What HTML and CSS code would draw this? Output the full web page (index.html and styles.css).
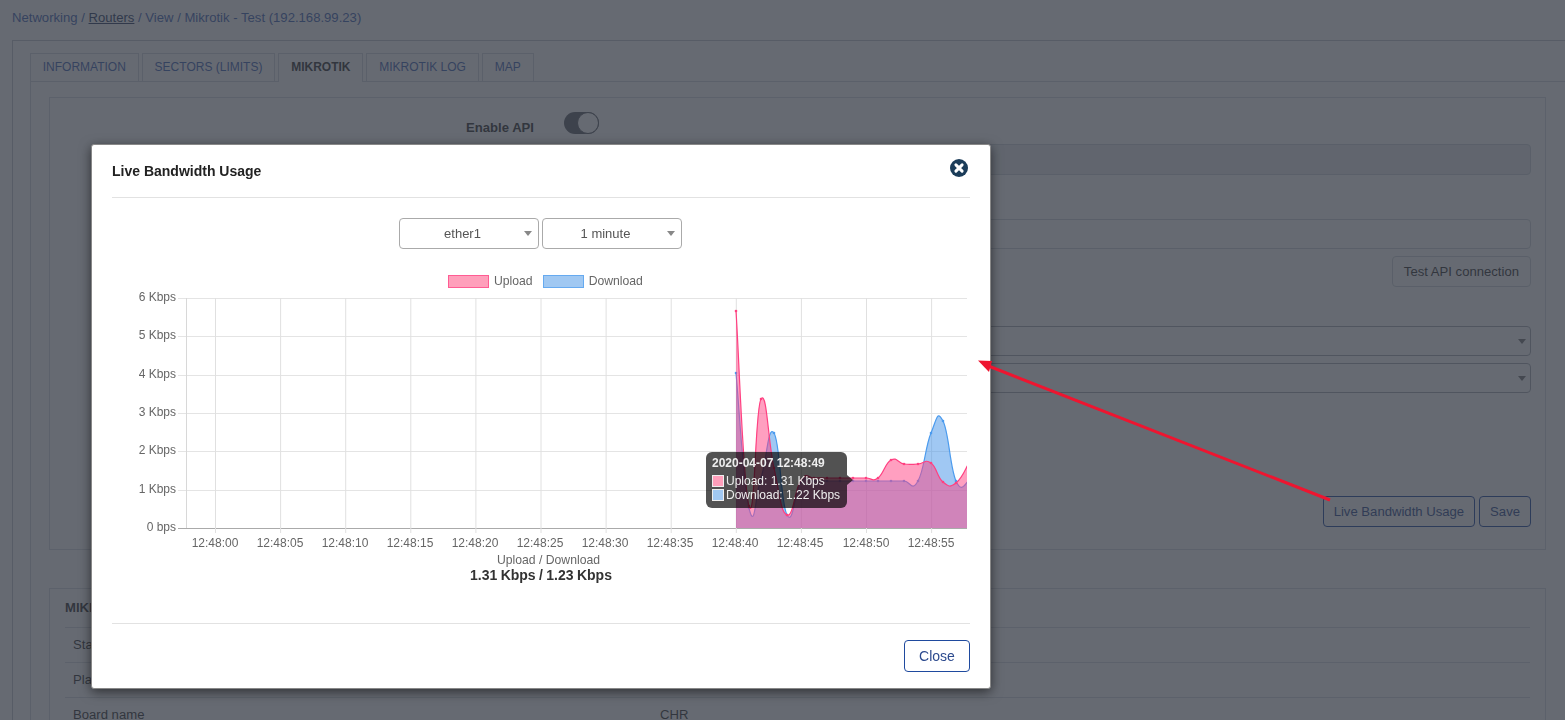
FILE: index.html
```html
<!DOCTYPE html>
<html lang="en">
<head>
  <meta charset="UTF-8" />
  <meta name="viewport" content="width=device-width, initial-scale=1.0"/>
  <title>Mikrotik - Test</title>
  <link rel="stylesheet" href="styles.css">
</head>
<body>
  <div class="page">
    <div class="breadcrumb">Networking / <a href="#">Routers</a> / View / Mikrotik - Test (192.168.99.23)</div>

    <div class="outer-panel">
      <ul class="tabs">
        <li class="tab">INFORMATION</li>
        <li class="tab">SECTORS (LIMITS)</li>
        <li class="tab tab-active">MIKROTIK</li>
        <li class="tab">MIKROTIK LOG</li>
        <li class="tab">MAP</li>
      </ul>
      <div class="tab-content">
        <form class="box settings">
          <div class="row row-api">
            <label class="row-label">Enable API</label>
            <span class="toggle"><span class="toggle-knob"></span></span>
          </div>
          <div class="row row-disabled"><div class="control control-disabled"></div></div>
          <div class="row row-input"><div class="control"></div></div>
          <div class="row row-test"><button type="button" class="btn">Test API connection</button></div>
          <div class="row row-select1"><div class="control control-select"></div></div>
          <div class="row row-select2"><div class="control control-select"></div></div>
          <div class="form-actions">
            <button type="button" class="btn btn-primary">Live Bandwidth Usage</button>
            <button type="button" class="btn btn-primary">Save</button>
          </div>
        </form>

        <div class="box info">
          <div class="info-title">MIKROTIK</div>
          <div class="info-row"><span class="info-name">Status</span></div>
          <div class="info-row"><span class="info-name">Platform</span></div>
          <div class="info-row"><span class="info-name">Board name</span><span>CHR</span></div>
        </div>
      </div>
    </div>
  </div>

  <div class="backdrop"></div>

  <div class="modal">
    <div class="modal-header">
      <h4 class="modal-title">Live Bandwidth Usage</h4>
      <svg class="modal-close" viewBox="0 0 18 18" width="18" height="18">
        <circle cx="9" cy="9" r="9" fill="#1b3c59"/>
        <path d="M5.9 5.9l6.2 6.2M12.1 5.9l-6.2 6.2" stroke="#fff" stroke-width="3" stroke-linecap="round"/>
      </svg>
    </div>
    <div class="modal-body">
      <div class="filters">
        <div class="select-wrap"><select class="select"><option>ether1</option></select></div>
        <div class="select-wrap"><select class="select"><option>1 minute</option></select></div>
      </div>
      <div class="legend">
        <span class="legend-swatch swatch-up"></span><span class="legend-text">Upload</span>
        <span class="legend-swatch swatch-down"></span><span class="legend-text">Download</span>
      </div>
      <div class="chart-wrap">
        <svg id="chart" class="chart" width="858" height="262"></svg>
        <div class="tooltip">
          <div class="tooltip-title">2020-04-07 12:48:49</div>
          <div class="tooltip-row"><span class="tooltip-swatch swatch-up"></span>Upload: 1.31 Kbps</div>
          <div class="tooltip-row"><span class="tooltip-swatch swatch-down"></span>Download: 1.22 Kbps</div>
        </div>
      </div>
      <div class="chart-caption">Upload / Download</div>
      <div class="chart-total">1.31 Kbps / 1.23 Kbps</div>
    </div>
    <div class="modal-footer">
      <button type="button" class="btn-close">Close</button>
    </div>
  </div>

  <svg class="arrow" width="1565" height="720" viewBox="0 0 1565 720">
    <line x1="1330" y1="500" x2="986" y2="365" stroke="#ee1530" stroke-width="3"/>
    <polygon points="978,360.5 992,361 989,372" fill="#ee1530"/>
  </svg>

  <script src="chart.js"></script>
</body>
</html>
```

FILE: styles.css
```css
html, body {
  margin: 0;
  height: 720px;
  overflow: hidden;
}
body {
  background: #fff;
  color: #333;
  font-family: "Liberation Sans", Arial, sans-serif;
  font-size: 13.12px;
}
.page {
  width: 1700px;
}
.breadcrumb {
  height: 40px;
  box-sizing: border-box;
  padding: 10px 12px 0;
  line-height: 15px;
  color: #3f64b4;
}
.breadcrumb a {
  color: #2c3d66;
}
.outer-panel {
  margin-left: 12px;
  padding: 12px 17px 0;
  border: 1px solid #c4c8d0;
  height: 800px;
}
.tabs {
  display: flex;
  align-items: flex-start;
  gap: 3px;
  list-style: none;
  margin: 0;
  padding: 0;
}
.tab {
  height: 27px;
  padding: 0 12px 0 11.75px;
  border: 1px solid #d4d8e0;
  border-bottom: none;
  line-height: 27px;
  font-size: 12px;
  color: #3f64b4;
  background: #fff;
}
.tab-active {
  position: relative;
  height: 28px;
  margin-bottom: -1px;
  font-weight: bold;
  color: #333;
}
.tab-content {
  border: 1px solid #d4d8e0;
  padding: 15px 18px;
  height: 700px;
}
.box {
  border: 1px solid #d8dce2;
}
.settings {
  width: 1497px;
  height: 453px;
  box-sizing: border-box;
  padding: 14px 14px 0 15px;
}
.row {
  padding-left: 499px;
  display: flex;
  width: 967px;
}
.row-api {
  position: relative;
  height: 22px;
  align-items: center;
}
.row-label {
  position: absolute;
  right: 997px;
  top: 8px;
  font-weight: bold;
  white-space: nowrap;
}
.toggle {
  width: 35px;
  height: 22px;
  border-radius: 11px;
  background: #5c6068;
  display: flex;
  justify-content: flex-end;
}
.toggle-knob {
  width: 22px;
  height: 22px;
  box-sizing: border-box;
  border: 1px solid #5c6068;
  border-radius: 50%;
  background: #fff;
}
.control {
  flex: 1;
  height: 30px;
  box-sizing: border-box;
  border: 1px solid #ced4da;
  border-radius: 4px;
  position: relative;
}
.control-disabled {
  height: 31px;
  background: #e9ecef;
}
.control-select {
  border-color: #a8acb4;
}
.control-select::after {
  content: "";
  position: absolute;
  right: 4px;
  top: 12px;
  border: 4.5px solid transparent;
  border-top: 5px solid #777;
  border-bottom: none;
}
.row-disabled { margin-top: 10px; }
.row-input { margin-top: 44px; }
.row-test { margin-top: 7px; justify-content: flex-end; }
.row-select1 { margin-top: 39px; }
.row-select2 { margin-top: 7px; }
.btn {
  height: 31px;
  padding: 0 11px;
  border: 1px solid #ced4da;
  border-radius: 4px;
  background: #fff;
  color: #333;
  font: 13.12px "Liberation Sans", Arial, sans-serif;
}
.btn-primary {
  padding: 0 10px;
  border-color: #1f4a9e;
  color: #2c4a8e;
}
.form-actions {
  display: flex;
  gap: 4px;
  justify-content: flex-end;
  margin-top: 103px;
}
.info {
  margin-top: 38px;
  width: 1465px;
  padding: 11px 15px;
}
.info-title {
  font-weight: bold;
  height: 27px;
  line-height: 16px;
}
.info-row {
  display: flex;
  height: 34px;
  border-top: 1px solid #d8dce2;
  line-height: 34px;
  padding-left: 8px;
}
.info-name {
  width: 587px;
}

.backdrop {
  position: fixed;
  inset: 0;
  background: rgba(51, 56, 67, 0.75);
}

.modal {
  position: fixed;
  left: 91px;
  top: 144px;
  width: 898px;
  height: 543px;
  border: 1px solid #888;
  border-radius: 3px;
  background: #fff;
  box-shadow: 0 3px 12px rgba(0, 0, 0, 0.55);
  display: flex;
  flex-direction: column;
}
.modal-header {
  margin: 0 20px;
  height: 52px;
  border-bottom: 1px solid #e2e2e2;
  display: flex;
  justify-content: space-between;
  align-items: flex-start;
}
.modal-title {
  margin: 18px 0 0;
  font-size: 14px;
  line-height: 17px;
  color: #222;
}
.modal-close {
  margin: 14px 2px 0 0;
}
.modal-body {
  flex: 1;
  margin: 0 20px;
  padding-top: 20px;
}
.filters {
  display: flex;
  justify-content: center;
  gap: 3px;
  height: 31px;
  padding-right: 2px;
}
.select-wrap {
  position: relative;
}
.select-wrap::after {
  content: "";
  position: absolute;
  right: 7px;
  top: 13px;
  border: 4.5px solid transparent;
  border-top: 5px solid #888;
  border-bottom: none;
}
.select {
  appearance: none;
  width: 140px;
  height: 31px;
  padding: 0 12px 0 0;
  border: 1px solid #aaa;
  border-radius: 4px;
  background: #fff;
  color: #555;
  font: 13px "Liberation Sans", Arial, sans-serif;
  text-align: center;
  text-align-last: center;
}
.legend {
  display: flex;
  align-items: center;
  height: 14px;
  margin: 25px 0 0 336px;
  font-size: 12.2px;
  color: #666;
}
.legend-swatch {
  width: 41px;
  height: 13px;
  box-sizing: border-box;
  border: 1.5px solid;
}
.swatch-up {
  background: #ff9fbb;
  border-color: #ff5c93;
}
.swatch-down {
  background: #a0c8f2;
  border-color: #66aaf0;
}
.legend-text {
  margin: 0 10px 0 5px;
}
.chart-wrap {
  position: relative;
  height: 262px;
  margin-top: 2px;
}
.chart {
  display: block;
}
.chart text {
  font-family: "Liberation Sans", Arial, sans-serif;
  font-size: 12px;
  fill: #666;
}
.tooltip {
  position: absolute;
  left: 594px;
  top: 162px;
  width: 141px;
  height: 56px;
  box-sizing: border-box;
  padding: 4px 6px;
  border-radius: 6px;
  background: rgba(0, 0, 0, 0.68);
  color: #eee;
  font-size: 12px;
  line-height: 14px;
  white-space: nowrap;
}
.tooltip::after {
  content: "";
  position: absolute;
  left: 100%;
  top: 23px;
  border: 5px solid transparent;
  border-left: 6px solid rgba(0, 0, 0, 0.68);
  border-right: none;
}
.tooltip-title {
  font-weight: bold;
  margin-bottom: 4px;
  line-height: 14px;
}
.tooltip-row {
  display: flex;
  align-items: center;
}
.tooltip-swatch {
  width: 12px;
  height: 12px;
  box-sizing: border-box;
  border: 1px solid;
  margin-right: 2px;
}
.chart-caption {
  margin-top: 1px;
  padding-left: 385px;
  font-size: 12.2px;
  line-height: 14px;
  color: #666;
}
.chart-total {
  padding-left: 358px;
  font-size: 14px;
  line-height: 16px;
  font-weight: bold;
  word-spacing: -0.5px;
  color: #333;
}
.modal-footer {
  margin: 0 20px;
  height: 64px;
  border-top: 1px solid #e2e2e2;
  display: flex;
  justify-content: flex-end;
  align-items: flex-start;
}
.btn-close {
  margin-top: 16px;
  width: 66px;
  height: 32px;
  border: 1px solid #1f4a9e;
  border-radius: 4px;
  background: #fff;
  color: #2c4a8e;
  font: 14px "Liberation Sans", Arial, sans-serif;
}
.arrow {
  position: fixed;
  left: 0;
  top: 0;
  pointer-events: none;
}
```

FILE: chart.js
```js
// svg origin is at page x=112, y=290
const svg = document.getElementById('chart');
const NS = 'http://www.w3.org/2000/svg';
const X0 = 74, X1 = 855, Y0 = 8, Y1 = 238;

const labels = ['12:48:00', '12:48:05', '12:48:10', '12:48:15', '12:48:20', '12:48:25',
  '12:48:30', '12:48:35', '12:48:40', '12:48:45', '12:48:50', '12:48:55'];
const yLabels = ['6 Kbps', '5 Kbps', '4 Kbps', '3 Kbps', '2 Kbps', '1 Kbps', '0 bps'];

// points in page coordinates, one per second from 12:48:40, last one is cut off by the plot edge
const xs = [736, 749, 761, 774, 787, 801, 814, 827, 840, 853, 866, 878, 891, 904, 918, 931, 943, 956, 969];
const upload = [311, 506, 399, 468, 515, 480, 478, 478, 478, 478, 478, 478, 460, 464, 464, 463, 482, 483, 463];
const download = [373, 508, 478, 433, 515, 482, 481, 481, 481, 481, 481, 481, 481, 481, 481, 433, 421, 481, 481];

function add(tag, attrs, text, parent) {
  const el = document.createElementNS(NS, tag);
  for (const k in attrs) el.setAttribute(k, attrs[k]);
  if (text) el.textContent = text;
  (parent || svg).appendChild(el);
  return el;
}

// horizontal grid
yLabels.forEach((label, i) => {
  const y = Math.round(Y0 + i * (Y1 - Y0) / 6) + 0.5;
  const last = i === 6;
  add('line', { x1: X0 - 8, x2: X1, y1: y, y2: y, stroke: last ? '#aaa' : '#e4e4e4' });
  add('text', { x: X0 - 10, y: y + 2.5, 'text-anchor': 'end' }, label);
});

// vertical grid, spacing is not a whole number so some lines come out soft
add('line', { x1: X0 + 0.5, x2: X0 + 0.5, y1: Y0, y2: Y1, stroke: '#d8d8d8' });
labels.forEach((label, i) => {
  const x = 103.5 + i * 65.1;
  add('line', { x1: x, x2: x, y1: Y0, y2: Y1 + 5, stroke: '#e0e0e0' });
  add('text', { x: Math.round(x) - 1, y: Y1 + 19, 'text-anchor': 'middle' }, label);
});

const defs = add('defs', {});
const clip = add('clipPath', { id: 'plot' }, null, defs);
add('rect', { x: X0, y: 0, width: X1 - X0, height: Y1 + 1 }, null, clip);
const plot = add('g', { 'clip-path': 'url(#plot)' });

// smooth curve through the points, a bit rounder than plain catmull-rom
function curve(ys) {
  const pts = xs.map((x, i) => [x - 112, ys[i] - 290]);
  let d = 'M' + pts[0];
  for (let i = 0; i < pts.length - 1; i++) {
    const p0 = pts[Math.max(i - 1, 0)], p1 = pts[i], p2 = pts[i + 1], p3 = pts[Math.min(i + 2, pts.length - 1)];
    const k = 0.24;
    const c1 = [p1[0] + (p2[0] - p0[0]) * k, p1[1] + (p2[1] - p0[1]) * k];
    const c2 = [p2[0] - (p3[0] - p1[0]) * k, p2[1] - (p3[1] - p1[1]) * k];
    d += 'C' + c1 + ' ' + c2 + ' ' + p2;
  }
  return d;
}

function series(ys, fill, stroke) {
  const line = curve(ys);
  const x0 = xs[0] - 112, xn = xs[xs.length - 1] - 112;
  add('path', { d: line + 'L' + xn + ',' + Y1 + 'L' + x0 + ',' + Y1 + 'Z', fill: fill }, null, plot);
  add('path', { d: line, fill: 'none', stroke: stroke, 'stroke-width': 1.2 }, null, plot);
  xs.forEach((x, i) => add('circle', { cx: x - 112, cy: ys[i] - 290, r: 1.3, fill: stroke }, null, plot));
}

series(download, 'rgba(66,146,232,0.5)', '#4b9bee');
series(upload, 'rgba(255,64,129,0.5)', '#ff4081');
```
